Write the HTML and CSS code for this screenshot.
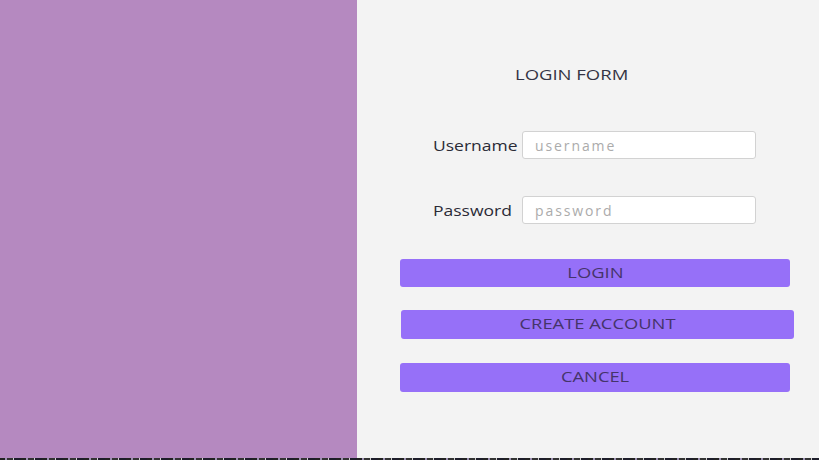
FILE: index.html
```html
<!DOCTYPE html>
<html>
<head>
<meta charset="utf-8">
<link rel="stylesheet" href="styles.css">
</head>
<body>
<div class="screen">
  <div class="side"></div>
  <div class="main">
    <div class="title"><span class="wide">LOGIN FORM</span></div>
    <div class="fields">
      <label class="lbl"><span class="wide">Username</span></label>
      <input class="inp" type="text" placeholder="username">
      <label class="lbl"><span class="wide">Password</span></label>
      <input class="inp" type="password" placeholder="password">
    </div>
    <div class="buttons">
      <button class="btn btn-login"><span class="wide">LOGIN</span></button>
      <button class="btn btn-create"><span class="wide">CREATE ACCOUNT</span></button>
      <button class="btn btn-cancel"><span class="wide">CANCEL</span></button>
    </div>
  </div>
</div>
<div class="strip"></div>
</body>
</html>
```
FILE: styles.css
```css
html, body {
  margin: 0;
  padding: 0;
  width: 819px;
  height: 460px;
  overflow: hidden;
  font-family: "Open Sans", "Noto Sans", sans-serif;
}
.screen {
  display: flex;
  height: 458px;
}
.side {
  width: 357px;
  background: #b589c0;
}
.main {
  flex: 1;
  background: #f3f3f3;
  display: flex;
  flex-direction: column;
}
.wide {
  display: inline-block;
  transform: scaleX(1.3);
  transform-origin: left center;
}
.title {
  margin-top: 65px;
  margin-left: 158px;
  font-size: 14px;
  line-height: 20px;
  color: #343444;
}
.title .wide {
  transform: scaleX(1.32);
}
.fields {
  margin-top: 46px;
  margin-left: 76px;
  display: grid;
  grid-template-columns: 84px 234px;
  column-gap: 5px;
  row-gap: 37px;
  align-items: center;
}
.lbl {
  font-size: 14px;
  color: #2a2a36;
}
.lbl .wide {
  transform: scaleX(1.25);
}
.inp {
  box-sizing: border-box;
  height: 28px;
  border: 1px solid #d2d2d2;
  border-radius: 3px;
  background: #fff;
  padding: 0 12px;
  font-family: "Open Sans", "Noto Sans", sans-serif;
  font-size: 14px;
  letter-spacing: 1.9px;
  color: #333;
  outline: none;
}
.inp::placeholder {
  color: #ababab;
}
.buttons {
  margin-top: 35px;
  margin-left: 43px;
  display: flex;
  flex-direction: column;
  align-items: flex-start;
}
.btn {
  box-sizing: border-box;
  border: none;
  border-radius: 3px;
  background: #9670f8;
  color: #45346a;
  font-family: "Open Sans", "Noto Sans", sans-serif;
  font-size: 14px;
  padding: 0 0 2px;
  height: 28px;
  width: 390px;
}
.btn .wide {
  transform: scaleX(1.31);
  transform-origin: center center;
}
.btn-create {
  margin-top: 23px;
  margin-left: 1px;
  width: 393px;
  height: 29px;
}
.btn-cancel {
  margin-top: 24px;
  height: 29px;
}
.strip {
  height: 2px;
  background: repeating-linear-gradient(90deg, #222 0 5px, #9a8fb0 5px 7px, #333 7px 13px, #ccc 13px 14px, #1d1d2a 14px 21px);
}
```
